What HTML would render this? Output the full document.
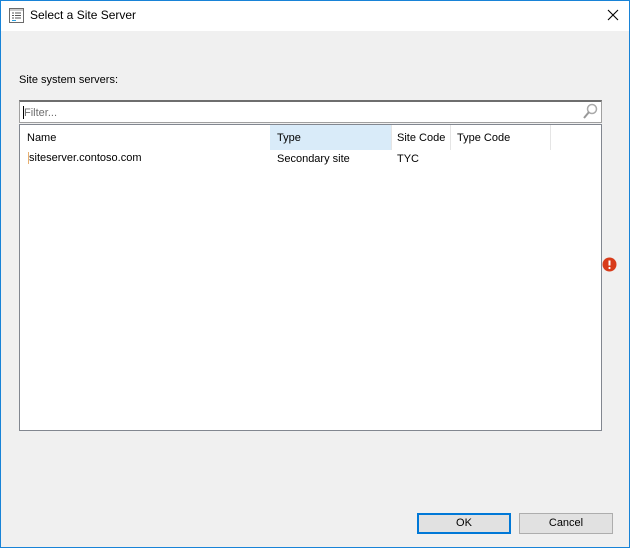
<!DOCTYPE html>
<html><head><style>
*{margin:0;padding:0;box-sizing:border-box}
body{width:631px;height:551px;background:#fff;font-family:"Liberation Sans",sans-serif;font-size:11px;color:#000;position:relative;overflow:hidden}
.win{position:absolute;left:0;top:0;width:630px;height:548px;border:1px solid #1883d7;background:#f0f0f0}
.title{position:absolute;left:1px;top:1px;width:628px;height:30px;background:#fff}
.abs{position:absolute}
</style></head><body>
<div class="win"></div>
<div class="title"></div>
<svg class="abs" style="left:9px;top:8px" width="15" height="15" viewBox="0 0 15 15"><rect x="0.5" y="0.5" width="14" height="14" fill="#fff" stroke="#6b6b6b"/><rect x="1" y="1" width="13" height="2" fill="#ccc"/><path d="M3 5h2M6 5h6M3 7.5h2M6 7.5h6M3 10h2M6 10h6" stroke="#555"/><path d="M3 12.5h4" stroke="#29a0e0"/></svg>
<div class="abs" style="left:30px;top:8px;font-size:12px">Select a Site Server</div>
<svg class="abs" style="left:607px;top:9px" width="12" height="12"><path d="M1 1L11 11M11 1L1 11" stroke="#000" stroke-width="1.1"/></svg>
<div class="abs" style="left:19px;top:74px">Site system servers:</div>
<div class="abs" style="left:19px;top:100px;width:583px;height:23px;background:#fff;border:1px solid #a0a0a0;border-top:2px solid #6e6e6e"></div>
<div class="abs" style="left:23px;top:106px;width:1px;height:13px;background:#000"></div>
<div class="abs" style="left:24px;top:107px;color:#6d6d6d">Filter...</div>
<svg class="abs" style="left:582px;top:103px" width="16" height="17"><circle cx="10" cy="6" r="4.5" fill="#fff" stroke="#aaa" stroke-width="1.5"/><path d="M7 9L2 15" stroke="#999" stroke-width="2"/></svg>
<div class="abs" style="left:19px;top:124px;width:583px;height:307px;background:#fff;border:1px solid #828790"></div>
<div class="abs" style="left:270px;top:125px;width:121px;height:25px;background:#d9ebf9"></div>
<div class="abs" style="left:391px;top:125px;width:1px;height:25px;background:#e5e5e5"></div>
<div class="abs" style="left:450px;top:125px;width:1px;height:25px;background:#e5e5e5"></div>
<div class="abs" style="left:550px;top:125px;width:1px;height:25px;background:#e5e5e5"></div>
<div class="abs" style="left:27px;top:132px">Name</div>
<div class="abs" style="left:277px;top:132px">Type</div>
<div class="abs" style="left:397px;top:132px">Site Code</div>
<div class="abs" style="left:457px;top:132px">Type Code</div>
<div class="abs" style="left:28px;top:152px;width:1px;height:12px;background:#e8b070"></div>
<div class="abs" style="left:29px;top:152px">siteserver.contoso.com</div>
<div class="abs" style="left:277px;top:153px">Secondary site</div>
<div class="abs" style="left:397px;top:153px">TYC</div>
<svg class="abs" style="left:602px;top:257px" width="15" height="15"><circle cx="7.5" cy="7.5" r="7" fill="#d83b1a"/><path d="M7.5 3.5v5" stroke="#fff" stroke-width="2"/><circle cx="7.5" cy="11" r="1.1" fill="#fff"/></svg>
<div class="abs" style="left:417px;top:513px;width:94px;height:21px;background:#e1e1e1;border:2px solid #0078d7;text-align:center;line-height:17px">OK</div>
<div class="abs" style="left:519px;top:513px;width:94px;height:21px;background:#e1e1e1;border:1px solid #adadad;text-align:center;line-height:19px">Cancel</div>
</body></html>
